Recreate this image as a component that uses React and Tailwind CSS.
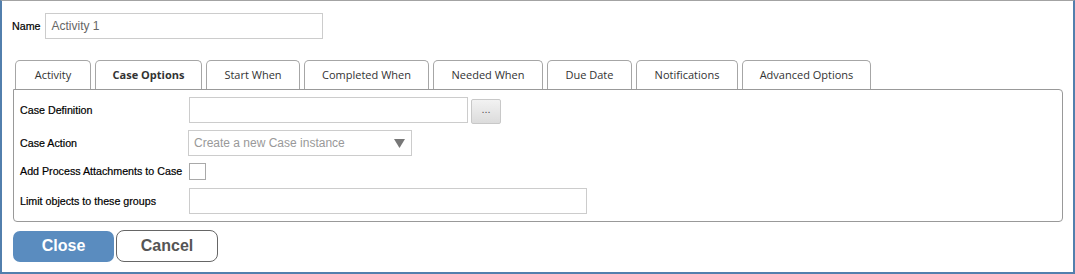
const tabs = [
  { label: 'Activity', w: 'w-[76px]' },
  { label: 'Case Options', w: 'w-[107px]', active: true },
  { label: 'Start When', w: 'w-[94px]' },
  { label: 'Completed When', w: 'w-[125px]' },
  { label: 'Needed When', w: 'w-[110px]' },
  { label: 'Due Date', w: 'w-[85px]' },
  { label: 'Notifications', w: 'w-[102px]' },
  { label: 'Advanced Options', w: 'w-[129px]' },
];

const Label = ({ children }) => (
  <div className="w-[169px] shrink-0 text-[10.7px] text-black leading-none [-webkit-text-stroke:0.2px_#000]">{children}</div>
);

export default function App() {
  return (
    <div className="box-border w-[1075px] h-[274px] bg-white border-t border-l-2 border-r-2 border-b-2 border-[#527fad] border-t-[#a3a3a3] pt-[12px] font-['Liberation_Sans',Arial,sans-serif]">
      {/* Name */}
      <div className="flex items-center ml-[10px] h-[26px]">
        <span className="text-[10.7px] text-black mr-[4px] [-webkit-text-stroke:0.2px_#000]">Name</span>
        <div className="box-border w-[278px] h-[26px] border border-[#cccccc] flex items-center pl-[6px] text-[12px] text-[#666]">
          Activity 1
        </div>
      </div>

      {/* Tabs */}
      <div className="flex gap-[4px] ml-[13px] mt-[21px] h-[29px]">
        {tabs.map((t) => (
          <div
            key={t.label}
            className={`box-border ${t.w} h-[29px] border border-b-0 border-[#a6a6a6] rounded-t-[5px] flex items-center justify-center text-[11px] text-[#333] font-['Open_Sans',sans-serif] ${t.active ? 'font-bold' : ''}`}
          >
            {t.label}
          </div>
        ))}
      </div>

      {/* Panel */}
      <div className="box-border ml-[11px] w-[1050px] h-[133px] border border-[#999] rounded-[4px] rounded-tl-none pl-[6px] pt-[7px]">
        <div className="flex items-center h-[26px]">
          <Label>Case Definition</Label>
          <div className="box-border w-[279px] h-[26px] border border-[#cccccc]" />
          <div className="box-border ml-[3px] mt-[2px] w-[30px] h-[25px] border border-[#c8c8c8] rounded-[2px] bg-gradient-to-b from-[#f2f2f2] to-[#dcdcdc] flex items-center justify-center text-[11px] text-[#555] leading-none pb-[3px]">
            ...
          </div>
        </div>

        <div className="flex items-center h-[26px] mt-[7px]">
          <Label>Case Action</Label>
          <div className="box-border -ml-[1px] w-[224px] h-[26px] border border-[#cccccc] flex items-center justify-between pl-[5px] pr-[6px] text-[12px] text-[#999]">
            <span>Create a new Case instance</span>
            <svg width="11" height="9" viewBox="0 0 11 9">
              <path d="M0 0 H11 L5.5 9 Z" fill="#777" />
            </svg>
          </div>
        </div>

        <div className="flex items-center h-[17px] mt-[7px]">
          <Label>Add Process Attachments to Case</Label>
          <div className="box-border w-[17px] h-[17px] border border-[#a9a9a9] bg-white" />
        </div>

        <div className="flex items-center h-[26px] mt-[8px]">
          <Label>Limit objects to these groups</Label>
          <div className="box-border w-[398px] h-[26px] border border-[#cccccc]" />
        </div>
      </div>

      {/* Buttons */}
      <div className="flex items-center gap-[2px] ml-[11px] mt-[8px]">
        <button className="box-border w-[101px] h-[31px] rounded-[7px] bg-[#5a8cbf] text-white text-[16px] font-bold">
          Close
        </button>
        <button className="box-border w-[102px] h-[32px] rounded-[8px] border border-[#666] bg-white text-[#555] text-[16px] font-bold">
          Cancel
        </button>
      </div>
    </div>
  );
}
